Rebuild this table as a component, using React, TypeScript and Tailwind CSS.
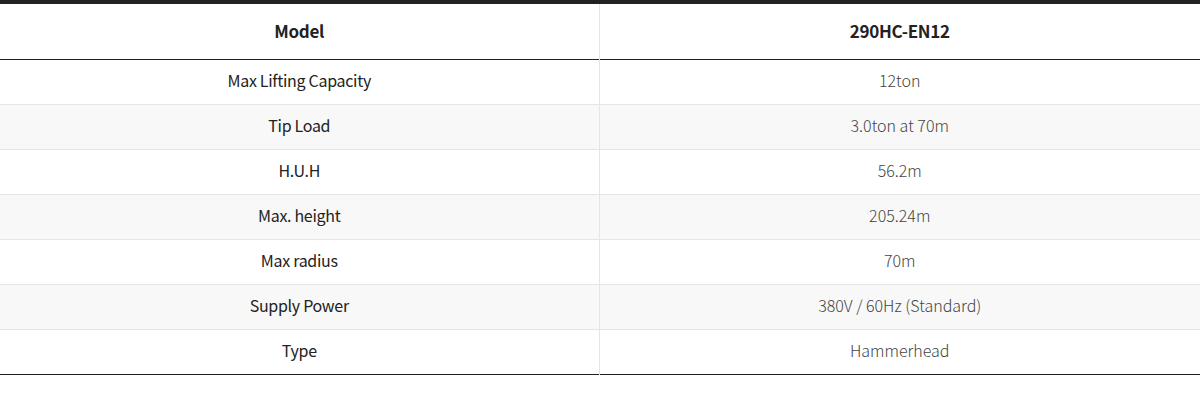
import React from "react";

const rows: [string, string][] = [
  ["Max Lifting Capacity", "12ton"],
  ["Tip Load", "3.0ton at 70m"],
  ["H.U.H", "56.2m"],
  ["Max. height", "205.24m"],
  ["Max radius", "70m"],
  ["Supply Power", "380V / 60Hz (Standard)"],
  ["Type", "Hammerhead"],
];

export default function App() {
  return (
    <div
      className="w-[1200px] h-[420px] bg-white"
      style={{ fontFamily: '"Noto Sans CJK KR", "Noto Sans", sans-serif' }}
    >
      <table className="w-full border-collapse border-t-4 border-t-[#222] border-b border-b-[#222]">
        <thead>
          <tr className="h-[57px] border-b border-b-[#222]">
            <th className="w-[599px] border-r border-r-[#e5e5e5] text-[17px] font-bold text-[#222] tracking-[-0.3px] pb-[2px]">
              Model
            </th>
            <th className="text-[17px] font-bold text-[#222] tracking-[-0.3px] pb-[2px]">290HC-EN12</th>
          </tr>
        </thead>
        <tbody>
          {rows.map(([k, v], i) => (
            <tr
              key={k}
              className={`h-[45px] border-b border-b-[#e5e5e5] last:border-b-0 ${i % 2 === 1 ? "bg-[#f8f8f8]" : "bg-white"}`}
            >
              <td className="border-r border-r-[#e5e5e5] text-center text-[16px] font-normal text-[#222] tracking-[-0.3px] pb-[3px]">
                {k}
              </td>
              <td className="text-center text-[16px] font-light text-[#444] tracking-[0px] pb-[3px]">
                {v}
              </td>
            </tr>
          ))}
        </tbody>
      </table>
    </div>
  );
}
